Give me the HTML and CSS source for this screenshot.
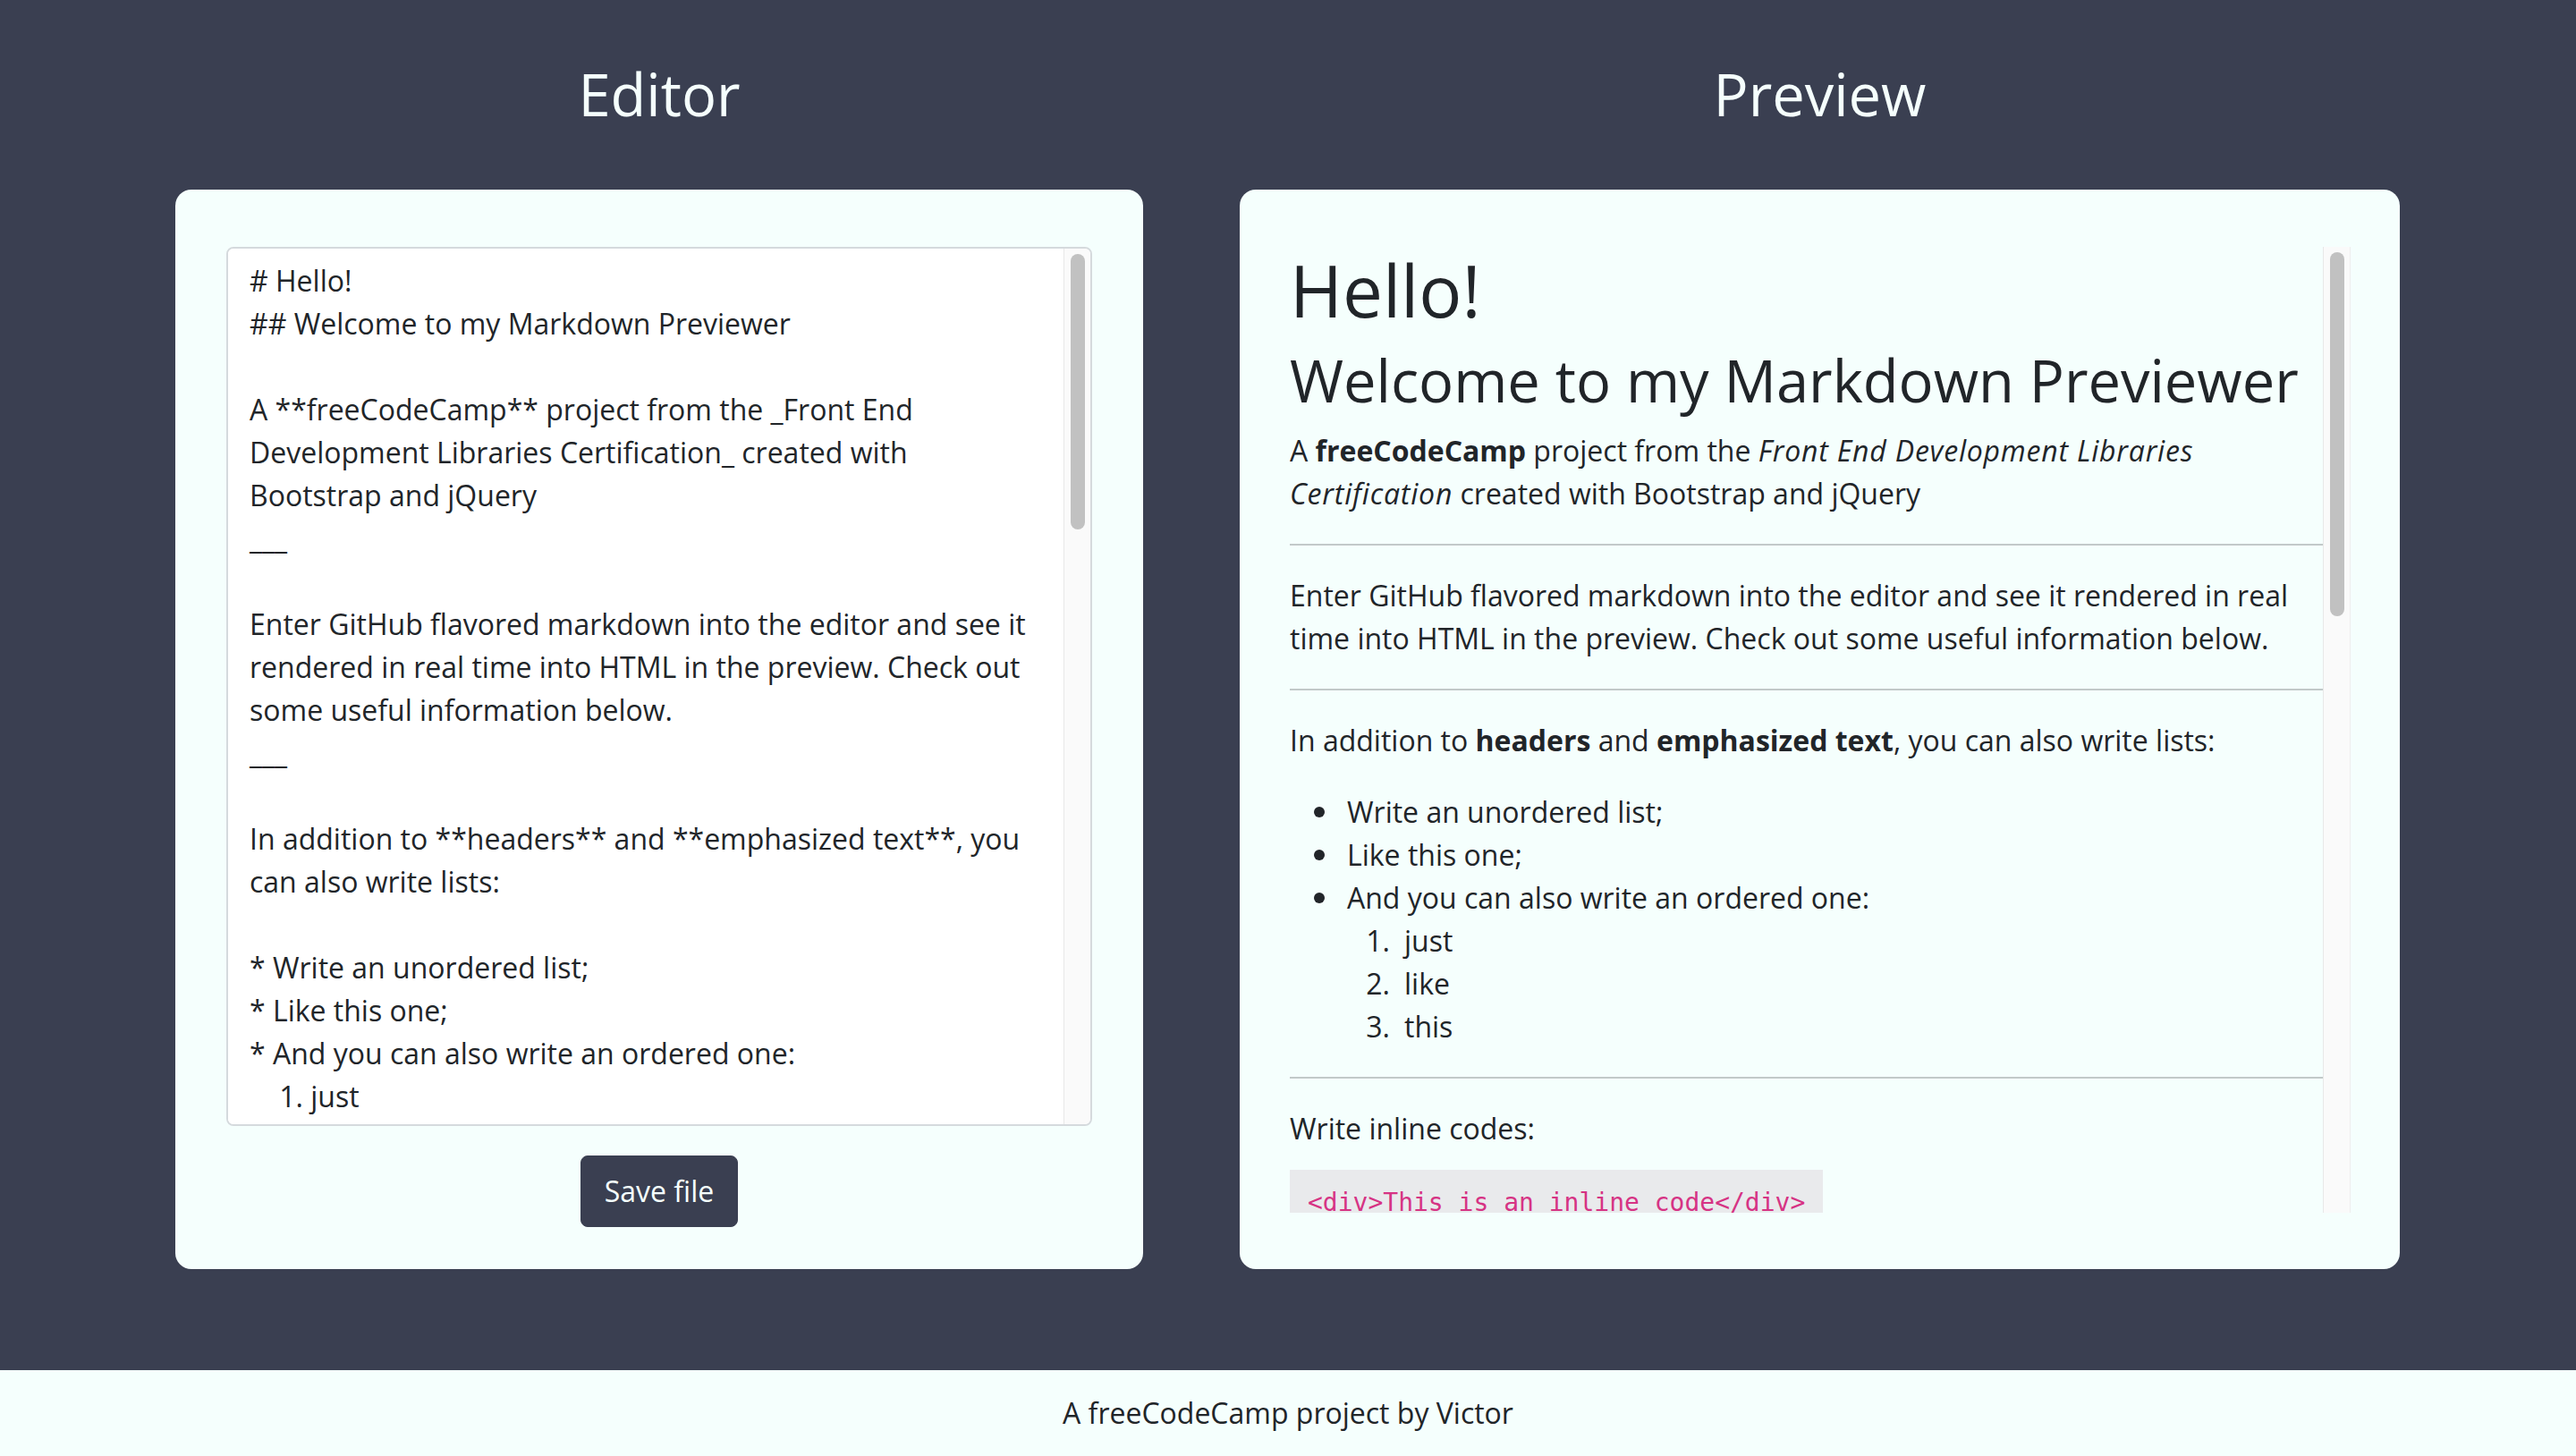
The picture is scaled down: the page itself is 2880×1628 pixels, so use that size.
FILE: index.html
```html
<!DOCTYPE html>
<html lang="en">
<head>
<meta charset="utf-8">
<title>Markdown Previewer</title>
<link rel="stylesheet" href="styles.css">
</head>
<body>
<main class="workspace">
  <section class="pane pane-editor">
    <h2 class="pane-title">Editor</h2>
    <div class="card card-editor">
      <div class="editor-box">
        <textarea id="editor" class="editor" spellcheck="false"># Hello!
## Welcome to my Markdown Previewer

A **freeCodeCamp** project from the _Front End Development Libraries Certification_ created with Bootstrap and jQuery
___

Enter GitHub flavored markdown into the editor and see it rendered in real time into HTML in the preview. Check out some useful information below.
___

In addition to **headers** and **emphasized text**, you can also write lists:

* Write an unordered list;
* Like this one;
* And you can also write an ordered one:
    1. just
    2. like
    3. this
___

Write inline codes:

&#96;&lt;div&gt;This is an inline code&lt;/div&gt;&#96;

Or multi-line code blocks:

&#96;&#96;&#96;
function helloWorld() {
  return "Hello, World!";
}
&#96;&#96;&#96;
___

You can also add [links](https://www.freecodecamp.org) and images:

![fCC Logo](https://cdn.freecodecamp.org/logo.svg)
___

&gt; Block quotes look like this!

And, of course, there are tables:

| Header | Another Header |
| ------ | -------------- |
| Cell   | Another cell   |
___

Thanks for visiting!</textarea>
        <div class="track" aria-hidden="true"><div class="thumb thumb-editor"></div></div>
      </div>
      <button class="btn-save" type="button">Save file</button>
    </div>
  </section>
  <section class="pane pane-preview">
    <h2 class="pane-title">Preview</h2>
    <div class="card card-preview">
      <div class="preview-box">
        <div id="preview" class="preview">
          <h1>Hello!</h1>
          <h2>Welcome to my Markdown Previewer</h2>
          <p>A <strong>freeCodeCamp</strong> project from the <em>Front End Development Libraries Certification</em> created with Bootstrap and jQuery</p>
          <hr>
          <p>Enter GitHub flavored markdown into the editor and see it rendered in real time into HTML in the preview. Check out some useful information below.</p>
          <hr>
          <p>In addition to <strong>headers</strong> and <strong>emphasized text</strong>, you can also write lists:</p>
          <ul>
            <li>Write an unordered list;</li>
            <li>Like this one;</li>
            <li>And you can also write an ordered one:
              <ol>
                <li>just</li>
                <li>like</li>
                <li>this</li>
              </ol>
            </li>
          </ul>
          <hr>
          <p>Write inline codes:</p>
          <p><code class="inline-code">&lt;div&gt;This is an inline code&lt;/div&gt;</code></p>
          <p>Or multi-line code blocks:</p>
          <pre class="code-block"><code>function helloWorld() {
  return "Hello, World!";
}</code></pre>
          <hr>
          <p>You can also add <a href="#">links</a> and images:</p>
          <p class="img-alt">fCC Logo</p>
          <hr>
          <blockquote><p>Block quotes look like this!</p></blockquote>
          <p>And, of course, there are tables:</p>
          <table class="md-table">
            <thead><tr><th>Header</th><th>Another Header</th></tr></thead>
            <tbody><tr><td>Cell</td><td>Another cell</td></tr></tbody>
          </table>
          <hr>
          <p>Thanks for visiting!</p>
        </div>
        <div class="track track-preview" aria-hidden="true"><div class="thumb thumb-preview"></div></div>
      </div>
    </div>
  </section>
</main>
<footer class="footer">A freeCodeCamp project by Victor</footer>
</body>
</html>
```

FILE: styles.css
```css
* {
  box-sizing: border-box;
}

html,
body {
  margin: 0;
}

body {
  background: #3a3f51;
  color: #212529;
  font-family: "Open Sans", "Noto Sans", sans-serif;
  font-size: 32px;
  line-height: 1.5;
}

.workspace {
  display: flex;
  align-items: stretch;
  gap: 108px;
  padding: 66px 197px 113px 196px;
}

.pane {
  display: flex;
  flex-direction: column;
  min-width: 0;
}

.pane-editor {
  flex: 0 0 1082px;
}

.pane-preview {
  flex: 1 1 auto;
}

.pane-title {
  margin: 0 0 68px;
  color: #f5fffd;
  font-size: 65px;
  font-weight: 500;
  line-height: 1.2;
  text-align: center;
}

.card {
  height: 1207px;
  background: #f5fffd;
  border-radius: 18px;
}

.card-editor {
  display: flex;
  flex-direction: column;
  align-items: center;
  padding: 64px 57px 0;
}

.editor-box {
  display: flex;
  width: 100%;
  height: 983px;
  background: #fff;
  border: 2px solid #d5dadd;
  border-radius: 8px;
  overflow: hidden;
}

.editor {
  flex: 1 1 auto;
  min-width: 0;
  height: 100%;
  margin: 0;
  padding: 12px 24px;
  background: #fff;
  color: #212529;
  border: 0;
  font: inherit;
  line-height: 1.5;
  resize: none;
  overflow: hidden;
  outline: none;
}

.track {
  flex: 0 0 30px;
  padding: 6px 6px 0 7px;
  background: #fafafa;
  border-left: 1px solid #e8e8e8;
}

.track-preview {
  border-right: 1px solid #eeeeee;
}

.thumb {
  width: 16px;
  border-radius: 8px;
  background: #c1c1c1;
}

.thumb-editor {
  height: 308px;
}

.thumb-preview {
  height: 407px;
}

.btn-save {
  margin-top: 33px;
  padding: 15px 26px;
  background: #3a3f51;
  color: #f5fffd;
  border: 1px solid #3a3f51;
  border-radius: 8px;
  font: inherit;
  line-height: 48px;
  cursor: pointer;
}

.card-preview {
  padding: 64px 55px 63px 56px;
}

.preview-box {
  display: flex;
  height: 1080px;
}

.preview {
  flex: 1 1 auto;
  min-width: 0;
  overflow: hidden;
}

.preview h1 {
  margin: 0 0 14px;
  font-size: 80px;
  font-weight: 500;
  line-height: 1.2;
}

.preview h2 {
  margin: 0 0 16px;
  font-size: 65px;
  font-weight: 500;
  line-height: 1.2;
}

.preview p {
  margin: 0 0 32px;
}

.preview em {
  letter-spacing: 0.8px;
}

.preview hr {
  margin: 32px 0;
  border: 0;
  border-top: 2px solid #c2c9c9;
}

.preview ul,
.preview ol {
  margin: 0 0 32px;
  padding-left: 64px;
}

.preview ul {
  list-style: none;
}

.preview ul > li {
  position: relative;
}

.preview ul > li::before {
  content: "";
  position: absolute;
  left: -37px;
  top: 18px;
  width: 12px;
  height: 12px;
  border-radius: 50%;
  background: #212529;
}

.preview li ol {
  margin: 0;
}

.preview ol > li::marker {
  content: counter(list-item) ".\2002";
}

.preview strong {
  font-weight: 700;
}

.preview a {
  color: #0d6efd;
}

.inline-code {
  padding: 20px;
  background: #e9eaec;
  color: #d63384;
  font-family: "DejaVu Sans Mono", monospace;
  font-size: 28px;
}

.code-block {
  margin: 0 0 32px;
  padding: 20px;
  background: #e9eaec;
  color: #212529;
  font-family: "DejaVu Sans Mono", monospace;
  font-size: 28px;
  line-height: 1.5;
}

.img-alt {
  color: #6c757d;
}

.preview blockquote {
  margin: 0 0 32px;
  padding-left: 24px;
  border-left: 6px solid #c2c9c9;
}

.preview blockquote p {
  margin: 0;
}

.md-table {
  margin-bottom: 32px;
  border-collapse: collapse;
}

.md-table th,
.md-table td {
  padding: 8px 16px;
  border: 2px solid #c2c9c9;
  text-align: left;
}

.footer {
  padding: 24px;
  background: #f5fffd;
  color: #212529;
  text-align: center;
}
```
